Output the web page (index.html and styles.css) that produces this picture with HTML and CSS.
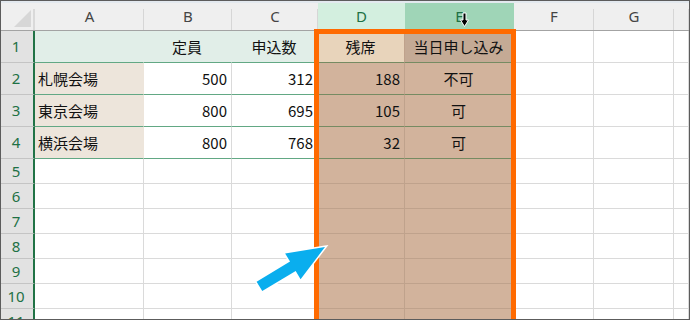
FILE: index.html
```html
<!DOCTYPE html>
<html lang="ja">
<head>
    <meta charset="UTF-8">
    <title>会場別 残席</title>
    <link rel="stylesheet" href="styles.css">
</head>
<body>
    <div class="window">
        <div class="sheet">
            <!-- column headers -->
            <div class="corner">
                <svg width="34" height="28" viewBox="0 0 34 28"><polygon points="30,7 30,24 13,24" fill="#d7d7d7"/></svg>
            </div>
            <div class="hd">A</div>
            <div class="hd">B</div>
            <div class="hd">C</div>
            <div class="hd hd-on">D</div>
            <div class="hd hd-hot">E</div>
            <div class="hd">F</div>
            <div class="hd">G</div>
            <div class="hd"></div>

            <!-- row 1 -->
            <div class="rh tall">1</div>
            <div class="cell title"></div>
            <div class="cell title ctr">定員</div>
            <div class="cell title ctr">申込数</div>
            <div class="cell sel band d1 ctr">残席</div>
            <div class="cell sel band e1 ctr">当日申し込み</div>
            <div class="cell"></div>
            <div class="cell"></div>
            <div class="cell"></div>

            <!-- row 2 -->
            <div class="rh tall">2</div>
            <div class="cell name">札幌会場</div>
            <div class="cell val num">500</div>
            <div class="cell val num">312</div>
            <div class="cell sel band num">188</div>
            <div class="cell sel band ctr">不可</div>
            <div class="cell"></div>
            <div class="cell"></div>
            <div class="cell"></div>

            <!-- row 3 -->
            <div class="rh tall">3</div>
            <div class="cell name">東京会場</div>
            <div class="cell val num">800</div>
            <div class="cell val num">695</div>
            <div class="cell sel band num">105</div>
            <div class="cell sel band ctr">可</div>
            <div class="cell"></div>
            <div class="cell"></div>
            <div class="cell"></div>

            <!-- row 4 -->
            <div class="rh tall">4</div>
            <div class="cell name">横浜会場</div>
            <div class="cell val num">800</div>
            <div class="cell val num">768</div>
            <div class="cell sel band num">32</div>
            <div class="cell sel band ctr">可</div>
            <div class="cell"></div>
            <div class="cell"></div>
            <div class="cell"></div>

            <!-- empty rows 5-11 -->
            <div class="rh">5</div>
            <div class="cell"></div><div class="cell"></div><div class="cell"></div>
            <div class="cell sel"></div><div class="cell sel"></div>
            <div class="cell"></div><div class="cell"></div><div class="cell"></div>

            <div class="rh">6</div>
            <div class="cell"></div><div class="cell"></div><div class="cell"></div>
            <div class="cell sel"></div><div class="cell sel"></div>
            <div class="cell"></div><div class="cell"></div><div class="cell"></div>

            <div class="rh">7</div>
            <div class="cell"></div><div class="cell"></div><div class="cell"></div>
            <div class="cell sel"></div><div class="cell sel"></div>
            <div class="cell"></div><div class="cell"></div><div class="cell"></div>

            <div class="rh">8</div>
            <div class="cell"></div><div class="cell"></div><div class="cell"></div>
            <div class="cell sel"></div><div class="cell sel"></div>
            <div class="cell"></div><div class="cell"></div><div class="cell"></div>

            <div class="rh">9</div>
            <div class="cell"></div><div class="cell"></div><div class="cell"></div>
            <div class="cell sel"></div><div class="cell sel"></div>
            <div class="cell"></div><div class="cell"></div><div class="cell"></div>

            <div class="rh">10</div>
            <div class="cell"></div><div class="cell"></div><div class="cell"></div>
            <div class="cell sel"></div><div class="cell sel"></div>
            <div class="cell"></div><div class="cell"></div><div class="cell"></div>

            <div class="rh">11</div>
            <div class="cell"></div><div class="cell"></div><div class="cell"></div>
            <div class="cell sel"></div><div class="cell sel"></div>
            <div class="cell"></div><div class="cell"></div><div class="cell"></div>
        </div>

        <!-- highlight frame, pointer arrow and column-select cursor -->
        <svg class="overlay" width="688" height="318" viewBox="1 1 688 318">
            <rect x="316.5" y="31.5" width="197" height="320" fill="none" stroke="#ff6a00" stroke-width="5"/>
            <polygon transform="translate(325 247) rotate(-31)"
                     points="0,0 -37.5,-15 -37.5,-5.5 -76.5,-5.5 -76.5,5.5 -37.5,5.5 -37.5,15"
                     fill="#0aaeee" stroke="#fff" stroke-width="3" stroke-linejoin="miter" paint-order="stroke"/>
            <polygon points="463,13 466,13 466,20 468.5,20 464.5,26.5 460.5,20 463,20"
                     fill="#000" stroke="#fff" stroke-width="1"/>
        </svg>
    </div>
</body>
</html>
```

FILE: styles.css
```css
body {
    margin: 0;
    background-color: #fff;
}
.window {
    position: relative;
    width: 688px;
    height: 318px;
    border: 1px solid #5c5c5c;
    overflow: hidden;
    font-family: "Noto Sans CJK JP", "Noto Sans", sans-serif;
    font-size: 15px;
    color: #111;
}
.sheet {
    display: grid;
    grid-template-columns: 34px 109px 88px 86px 87px 109px 80px 80px 1fr;
    grid-template-rows: 30px repeat(4, 32px) repeat(7, 25px);
}
.overlay {
    position: absolute;
    left: 0;
    top: 0;
}

/* header strip */
.corner, .hd {
    border-top: 2px solid #e3e9ef;
    border-bottom: 1px solid #a3a3a3;
    background: linear-gradient(#d6d6d6, #d6d6d6) right 6px / 1px calc(100% - 6px) no-repeat, #efefef;
}
.corner {
    background: linear-gradient(#d9d9d9, #d9d9d9) right 6px / 2px calc(100% - 6px) no-repeat, #efefef;
}
.corner svg {
    display: block;
}
.hd {
    display: flex;
    align-items: center;
    justify-content: center;
    font-family: "Noto Sans", sans-serif;
    color: #444;
    line-height: 1;
}
.hd-on {
    background: #d3efdf;
    color: #1e7145;
}
.hd-hot {
    background: #9fd5b7;
    color: #1e7145;
}

/* row numbers */
.rh {
    display: flex;
    align-items: center;
    justify-content: center;
    padding-right: 2px;
    background-color: #e2e2e2;
    border-right: 2px solid #217346;
    border-bottom: 1px solid #c4c4c4;
    font-family: "Noto Sans", sans-serif;
    color: #1e7145;
    line-height: 1;
}

/* cells */
.cell {
    display: flex;
    align-items: center;
    padding: 0 4px 0 3px;
    border-right: 1px solid #dadada;
    border-bottom: 1px solid #dadada;
    white-space: nowrap;
    line-height: 1;
}
.num {
    justify-content: flex-end;
}
.ctr {
    justify-content: center;
}
.title {
    background-color: #e1eee8;
    border-right-color: #e1eee8;
    border-bottom-color: #62a884;
}
.name {
    background-color: #ede5db;
    border-right-color: #ede5db;
    border-bottom-color: #62a884;
}
.val {
    border-bottom-color: #62a884;
}
.sel {
    background-color: #d2b39c;
    border-right-color: #bfa28c;
    border-bottom-color: #bfa28c;
}
.band {
    border-bottom-color: #768b62;
}
.d1 {
    background-color: #e8d4bb;
}
.e1 {
    background-color: #c4aa95;
}
```
